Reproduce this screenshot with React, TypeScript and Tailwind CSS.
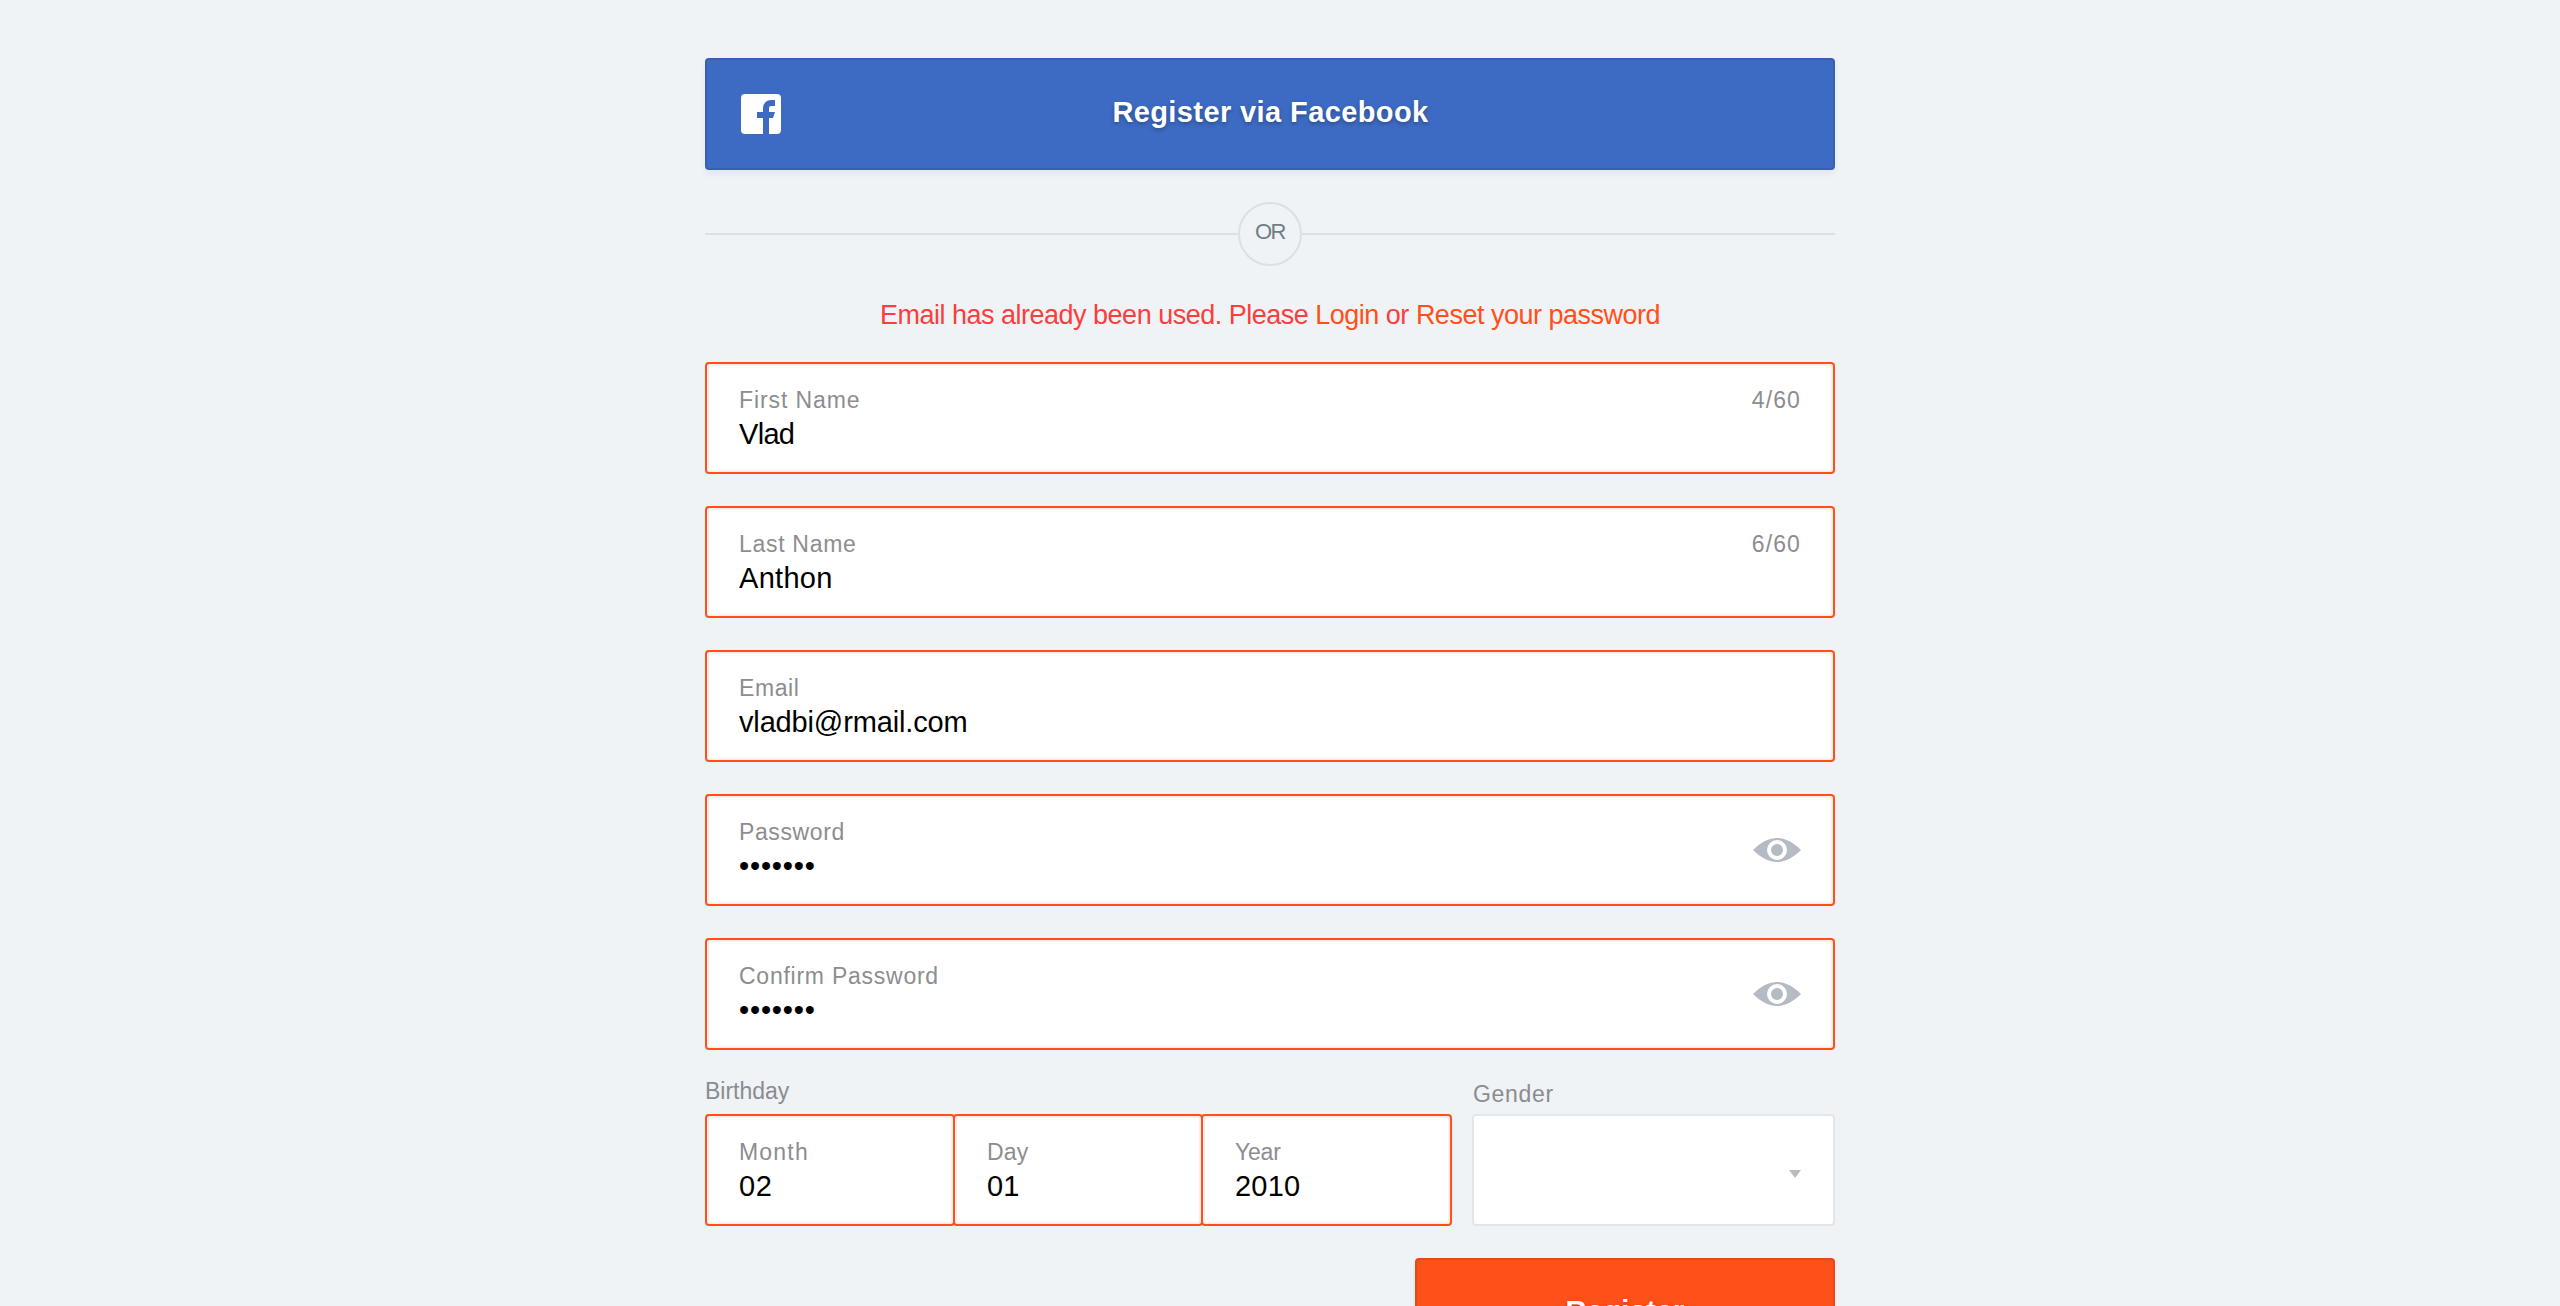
import type { ReactNode } from "react";

type FieldProps = {
  label: string;
  labelClass: string;
  value: string;
  valueClass?: string;
  className?: string;
  children?: ReactNode;
};

function Field({ label, labelClass, value, valueClass = "", className = "", children }: FieldProps) {
  return (
    <div
      className={`flex h-28 justify-between rounded-[4px] border-2 border-[#ff5019] bg-white pr-8 pl-8 shadow-[inset_0_0_0_2px_#ffeee9] ${className}`}
    >
      <div className="flex flex-col pt-[22px]">
        <label className={`text-[23px] leading-7 whitespace-nowrap text-[#8d8d8f] ${labelClass}`}>{label}</label>
        <span className={`text-[29px] leading-10 whitespace-nowrap text-black ${valueClass}`}>{value}</span>
      </div>
      {children}
    </div>
  );
}

function Counter({ text }: { text: string }) {
  return <span className="pt-[22px] text-[23px] leading-7 tracking-[1.1px] text-[#8d8d8f]">{text}</span>;
}

function Eye() {
  return (
    <svg className="mt-[42px] h-6 w-12" viewBox="0 0 48 24">
      <path d="M0 12C8 4 16 0 24 0s16 4 24 12c-8 8-16 12-24 12S8 20 0 12Z" fill="#b5bbc3" />
      <circle cx="24" cy="12" r="8" fill="#b5bbc3" stroke="#fff" strokeWidth="4" />
    </svg>
  );
}

export default function App() {
  return (
    <main className="flex h-[1306px] w-[2560px] flex-col overflow-hidden bg-[#eff3f6] pt-[58px] pl-[705px] font-['Liberation_Sans',Arial,sans-serif]">
      <div className="flex w-[1130px] shrink-0 flex-col">
        <button className="grid h-28 grid-cols-[1fr_auto_1fr] items-center rounded-[4px] border-2 border-[#375fb4] bg-[#3d6bc4] pl-[34px] pr-[33px] shadow-[0_4px_6px_rgba(0,0,0,0.05)]">
          <svg className="h-10 w-10" viewBox="0 0 40 40">
            <path
              fill="#fff"
              d="M4 0H36a4 4 0 0 1 4 4V36a4 4 0 0 1-4 4H28V24h4l2-6H28V14a2 2 0 0 1 2-2h4V6H30a8 8 0 0 0-8 8v4H16v6h6V40H4a4 4 0 0 1-4-4V4a4 4 0 0 1 4-4Z"
            />
          </svg>
          <span className="pb-1 text-[29px] leading-10 font-bold tracking-[0.4px] text-white [text-shadow:0_2px_4px_rgba(0,0,0,0.3)]">
            Register via Facebook
          </span>
        </button>

        <div className="mt-8 flex h-16 items-center">
          <div className="h-0.5 flex-1 bg-[#dddfe1]" />
          <div className="flex h-16 w-16 items-center justify-center rounded-full border-2 border-[#dddfe1] pb-[5px] text-[22px] leading-7 tracking-[-1.6px] text-[#6f7e85]">
            OR
          </div>
          <div className="h-0.5 flex-1 bg-[#dddfe1]" />
        </div>

        <p className="mt-[29px] mb-[27px] text-center text-[27px] leading-10 tracking-[-0.5px] text-[#f93f3c]">
          Email has already been used. Please <a className="text-[#ff5019]">Login</a> or{" "}
          <a className="text-[#ff5019]">Reset your password</a>
        </p>

        <div className="flex flex-col gap-8">
          <Field label="First Name" labelClass="tracking-[0.9px]" value="Vlad" valueClass="tracking-[-0.7px]">
            <Counter text="4/60" />
          </Field>
          <Field label="Last Name" labelClass="tracking-[0.7px]" value="Anthon" valueClass="tracking-[0.3px]">
            <Counter text="6/60" />
          </Field>
          <Field label="Email" labelClass="tracking-[0.6px]" value="vladbi@rmail.com" valueClass="tracking-[-0.15px]" />
          <Field label="Password" labelClass="tracking-[0.6px]" value="•••••••" valueClass="tracking-[0.8px]">
            <Eye />
          </Field>
          <Field label="Confirm Password" labelClass="tracking-[0.75px]" value="•••••••" valueClass="tracking-[0.8px]">
            <Eye />
          </Field>
        </div>

        <div className="flex justify-between">
          <div className="w-[747px]">
            <div className="h-16 pt-[27px] text-[23px] leading-7 tracking-[0px] text-[#8a8c90]">Birthday</div>
            <div className="flex">
              <Field className="w-[250px]" label="Month" labelClass="tracking-[1.2px]" value="02" valueClass="tracking-[0.5px]" />
              <Field className="-ml-0.5 w-[250px]" label="Day" labelClass="tracking-[0.2px]" value="01" valueClass="tracking-[0px]" />
              <Field className="-ml-0.5 w-[251px]" label="Year" labelClass="tracking-[-0.2px]" value="2010" valueClass="tracking-[0.2px]" />
            </div>
          </div>
          <div className="w-[363px]">
            <div className="h-16 pt-[30px] pl-px text-[23px] leading-7 tracking-[0.7px] text-[#8a8c90]">Gender</div>
            <div className="flex h-28 items-start justify-end rounded-[4px] border-2 border-[#e3e5e6] bg-white pt-[54px] pr-8">
              <svg className="h-2 w-3" viewBox="0 0 12 8">
                <path d="M0 0H12L6 8Z" fill="#b5bcc2" />
              </svg>
            </div>
          </div>
        </div>

        <button className="mt-8 h-28 w-[420px] self-end rounded-[4px] border-2 border-[#e64817] bg-[#ff5019] pb-1.5 text-[29px] leading-10 font-bold tracking-[0.4px] text-white shadow-[0_4px_6px_rgba(0,0,0,0.05)] [text-shadow:0_2px_4px_rgba(0,0,0,0.3)]">
          Register
        </button>
      </div>
    </main>
  );
}
